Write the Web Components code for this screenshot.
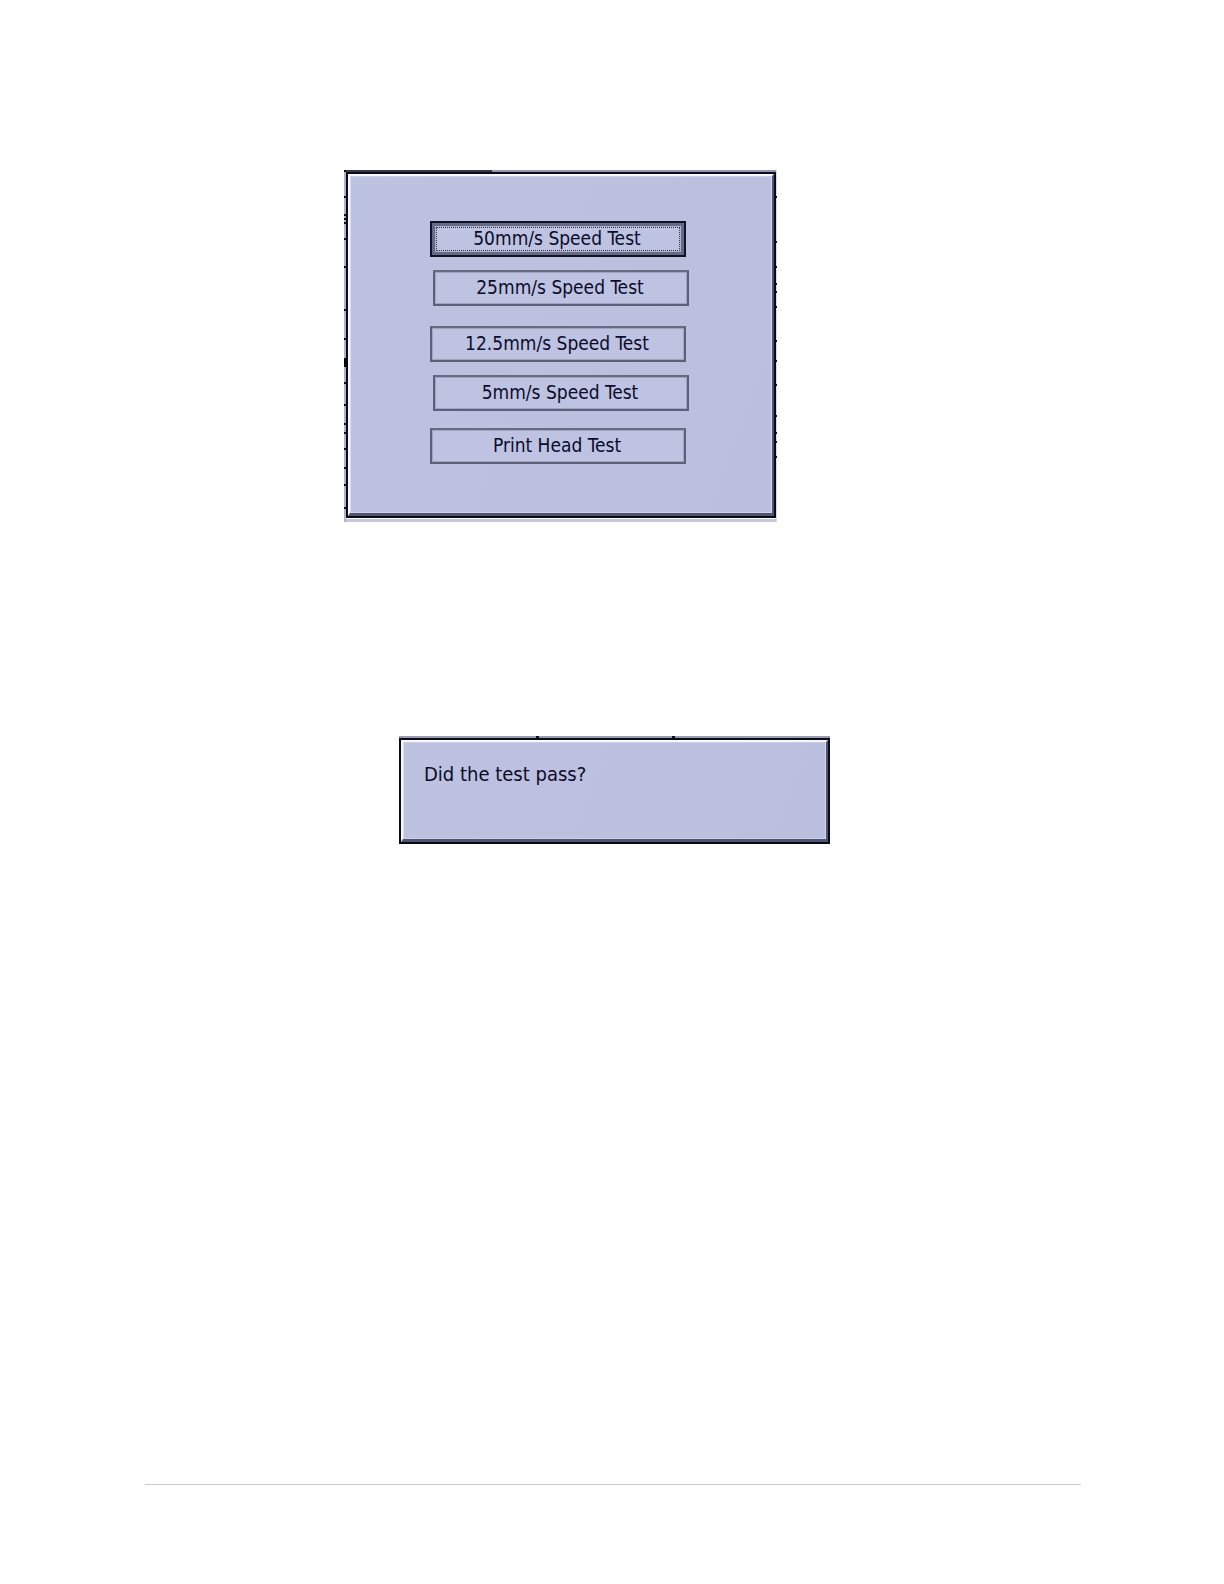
<!DOCTYPE html>
<html lang="en">
<head>
<meta charset="utf-8">
<title>Recorder tests</title>
<style>
body { margin: 0; background: #fff; }
</style>
</head>
<body>
<manual-page>
  <bevel-dialog class="menu" ticks>
    <test-menu>
      <test-button active>50mm/s Speed Test</test-button>
      <test-button>25mm/s Speed Test</test-button>
      <test-button>12.5mm/s Speed Test</test-button>
      <test-button>5mm/s Speed Test</test-button>
      <test-button>Print Head Test</test-button>
    </test-menu>
  </bevel-dialog>
  <bevel-dialog class="prompt">
    <prompt-text>Did the test pass?</prompt-text>
  </bevel-dialog>
</manual-page>
<script>
class Base extends HTMLElement {
  constructor() {
    super();
    this.attachShadow({ mode: 'open' }).innerHTML = this.constructor.markup;
  }
}

class ManualPage extends Base {
  static markup = `
    <style>
      :host { display: flex; flex-direction: column; box-sizing: border-box; min-height: 100vh;
        padding: 170px 143px 99px 145px; font: 19px/24px "DejaVu Sans Condensed", "DejaVu Sans", sans-serif; color: #0b0c2b; }
      main { display: flex; flex-direction: column; align-items: flex-start; gap: 214px; flex: 1; }
      ::slotted(.menu) { margin-left: 199px; width: min(100%, 433px); }
      ::slotted(.prompt) { margin-left: 254px; width: min(100%, 431px); }
      footer { border-top: 1px solid #cbcbcb; }
    </style>
    <main><slot></slot></main>
    <footer></footer>`;
}

class BevelDialog extends Base {
  static markup = `
    <style>
      :host { display: flex; box-sizing: border-box; }
      .middle { flex: 1; min-width: 0; }
      .rule { height: 2px; background:
        linear-gradient(#10101c, #10101c) 137px 0 / 3px 2px no-repeat,
        linear-gradient(#10101c, #10101c) 273px 0 / 3px 2px no-repeat, #9a9cb2; }
      .frame { border: 2px solid #0b0b17; }
      .bevel { border: 2px solid; border-width: 2px 2px 3px; border-color: #f6f7ff #50546e #50546e #f6f7ff; }
      .face { background: linear-gradient(110deg, #bcc3e0, #bdc0df 30%, #bbbfde);
        border: 1px solid; border-color: #c9cdec #d2d8f2 #c9cfed #d9dcf4; }
      .edge { display: none; height: 100%; flex: none; background: #aeb1cb; }
      .right { background: #d8dae6; }
      :host([ticks]) .edge { display: block; }
      :host([ticks]) .middle { border-bottom: 3px solid #c3c7df; }
      :host([ticks]) .rule { background: linear-gradient(90deg, #38384a 34%, #9496b5 34%); }
    </style>
    <svg class="edge" width="2" height="352" viewBox="0 0 2 352" preserveAspectRatio="none" aria-hidden="true">
      <path stroke="#10101c" stroke-width="2" d="M0 1h2M0 27h2M0 45h2M0 49h2M0 53h2M0 69h2M0 97h2M0 140h2M0 169h2M0 213h2M0 235h2M0 254h2M0 263h2M0 279h2M0 298h2M0 315h2M0 338h2"/>
      <path fill="#05050c" d="M0 188h2v9H0z"/>
    </svg>
    <div class="middle"><div class="rule"></div><div class="frame"><div class="bevel"><div class="face"><slot></slot></div></div></div></div>
    <svg class="edge right" width="1" height="352" viewBox="0 0 1 352" preserveAspectRatio="none" aria-hidden="true">
      <path stroke="#10101c" stroke-width="2" d="M0 27h1M0 72h1M0 97h1M0 114h1M0 122h1M0 137h1M0 171h1M0 191h1M0 215h1M0 246h1M0 263h1M0 272h1M0 287h1"/>
    </svg>`;
}

class TestMenu extends Base {
  static markup = `
    <style>
      :host { display: flex; flex-direction: column; align-items: center; gap: 13px; padding: 44px 0 48px; }
      ::slotted(:nth-child(odd)) { margin-right: 6px; }
      ::slotted(:nth-child(3)) { margin-top: 7px; }
      ::slotted(:nth-child(5)) { margin-top: 4px; }
    </style>
    <slot></slot>`;
}

class TestButton extends Base {
  static markup = `
    <style>
      :host { display: block; width: 256px; max-width: 100%; }
      button { display: block; box-sizing: border-box; width: 100%; height: 36px; margin: 0; padding: 0 2px 2px 0;
        font: inherit; color: inherit; background: #bec3e2; border: 2px solid #5c6079;
        border-top-color: #666a82; box-shadow: inset 0 0 0 1px #a0a4c0; border-radius: 0; text-align: center; white-space: nowrap; }
      span { display: block; }
      :host([active]) button { padding: 4px; border-color: #101329; box-shadow: inset 0 0 0 3px #666b83, inset 0 0 0 4px #b0b4cf; }
      :host([active]) span { box-sizing: border-box; height: 24px; line-height: 20px; padding-right: 2px; border: 1px dotted #34364b; }
    </style>
    <button type="button"><span><slot></slot></span></button>`;
}

class PromptText extends Base {
  static markup = `
    <style>
      :host { display: block; padding: 19px 20px 52px; font-size: 20px; }
      p { margin: 0; }
    </style>
    <p><slot></slot></p>`;
}

customElements.define('manual-page', ManualPage);
customElements.define('bevel-dialog', BevelDialog);
customElements.define('test-menu', TestMenu);
customElements.define('test-button', TestButton);
customElements.define('prompt-text', PromptText);
</script>
</body>
</html>
